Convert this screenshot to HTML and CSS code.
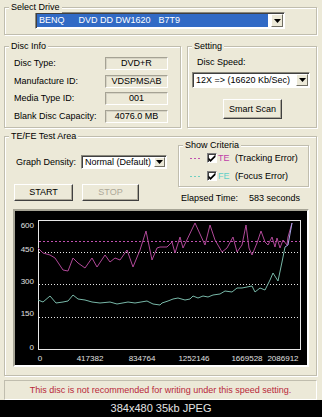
FILE: index.html
```html
<!DOCTYPE html>
<html>
<head>
<meta charset="utf-8">
<link rel="stylesheet" href="styles.css">
</head>
<body>
<div class="win">
  <div class="group g-drive">
    <span class="gtitle">Select Drive</span>
    <div class="drive-select">
      <span class="sel-hl"><span>BENQ</span><span class="sp1">DVD DD DW1620</span><span class="sp2">B7T9</span></span>
      <span class="arrow-btn"><svg width="7" height="4" viewBox="0 0 7 4"><path d="M0 0h7L3.5 4z" fill="#000"/></svg></span>
    </div>
  </div>

  <div class="row2">
    <div class="group g-info">
      <span class="gtitle">Disc Info</span>
      <div class="info-row"><span class="info-lbl">Disc Type:</span><span class="info-box">DVD+R</span></div>
      <div class="info-row"><span class="info-lbl">Manufacture ID:</span><span class="info-box">VDSPMSAB</span></div>
      <div class="info-row"><span class="info-lbl">Media Type ID:</span><span class="info-box">001</span></div>
      <div class="info-row"><span class="info-lbl">Blank Disc Capacity:</span><span class="info-box">4076.0 MB</span></div>
    </div>
    <div class="group g-setting">
      <span class="gtitle">Setting</span>
      <div class="lbl-speed">Disc Speed:</div>
      <div class="combo speed-select">
        <span class="combo-text">12X =&gt; (16620 Kb/Sec)</span>
        <span class="arrow-btn"><svg width="7" height="4" viewBox="0 0 7 4"><path d="M0 0h7L3.5 4z" fill="#000"/></svg></span>
      </div>
      <div class="btn btn-scan">Smart Scan</div>
    </div>
  </div>

  <div class="group g-test">
    <span class="gtitle">TE/FE Test Area</span>
    <div class="test-top">
      <div class="test-left">
        <div class="density-row">
          <span class="density-lbl">Graph Density:</span>
          <div class="combo density-select">
            <span class="combo-text">Normal (Default)</span>
            <span class="arrow-btn"><svg width="7" height="4" viewBox="0 0 7 4"><path d="M0 0h7L3.5 4z" fill="#000"/></svg></span>
          </div>
        </div>
        <div class="btn-row">
          <div class="btn btn-start">START</div>
          <div class="btn btn-stop">STOP</div>
        </div>
      </div>
      <div class="test-right">
        <div class="group g-criteria">
          <span class="gtitle">Show Criteria</span>
          <div class="crit-row">
            <svg class="dash" width="10" height="3" viewBox="0 0 10 3"><line x1="0" y1="1.5" x2="10" y2="1.5" stroke="#c050b0" stroke-width="1" stroke-dasharray="2 2"/></svg>
            <span class="chk"><svg width="8" height="8" viewBox="0 0 8 8"><path d="M0.5 3.5l2 2L7.5 0.5v2.5L2.5 8 0.5 6z" fill="#000"/></svg></span>
            <span class="code te">TE</span><span class="crit-txt">(Tracking Error)</span>
          </div>
          <div class="crit-row">
            <svg class="dash" width="10" height="3" viewBox="0 0 10 3"><line x1="0" y1="1.5" x2="10" y2="1.5" stroke="#70d0c0" stroke-width="1" stroke-dasharray="2 2"/></svg>
            <span class="chk"><svg width="8" height="8" viewBox="0 0 8 8"><path d="M0.5 3.5l2 2L7.5 0.5v2.5L2.5 8 0.5 6z" fill="#000"/></svg></span>
            <span class="code fe">FE</span><span class="crit-txt">(Focus Error)</span>
          </div>
        </div>
        <div class="elapsed"><span class="el-lbl">Elapsed Time:</span><span>583 seconds</span></div>
      </div>
    </div>
    <div class="graph">
      <svg width="292" height="154" viewBox="15 211 292 154">
        <rect x="15" y="211" width="292" height="154" fill="#000"/>
        <line x1="39" y1="241.5" x2="300" y2="241.5" stroke="#c050b0" stroke-width="1" stroke-dasharray="2 2"/>
        <line x1="39" y1="252.5" x2="300" y2="252.5" stroke="#e8e8e8" stroke-width="1" stroke-dasharray="1 2"/>
        <line x1="39" y1="284.5" x2="300" y2="284.5" stroke="#e8e8e8" stroke-width="1" stroke-dasharray="1 2"/>
        <line x1="39" y1="317.5" x2="300" y2="317.5" stroke="#e8e8e8" stroke-width="1" stroke-dasharray="1 2"/>
        <rect x="38.5" y="220.5" width="262" height="129" fill="none" stroke="#e8e8e8" stroke-width="1"/>
        <polyline fill="none" stroke="#b04898" stroke-width="1" points="38,248 43,253 50,255 55,258 63,270 68,271 73,258 78,263 85,268 92,258 97,267 105,255 110,262 115,258 120,260 127,250 133,267 140,250 146,231 152,260 157,248 160,247 167,247 172,242 175,253 180,237 183,248 195,223 205,245 210,225 215,240 222,252 227,248 233,237 237,252 242,245 246,225 249,248 252,255 257,243 261,231 265,242 268,245 272,237 275,247 277,238 280,248 283,240 287,245 288,237 292,223"/>
        <polyline fill="none" stroke="#78b8a8" stroke-width="1" points="38,300 43,302 50,296 56,303 63,302 68,301 73,295 78,299 85,300 92,302 100,303 110,302 117,304 128,302 135,303 147,301 153,304 160,305 162,303 168,301 173,299 178,298 185,300 190,299 193,296 198,298 203,296 208,297 213,295 220,294 225,291 232,292 237,288 242,288 247,287 252,286 255,292 260,288 265,290 270,280 273,273 278,281 282,262 285,247"/>
        <polyline fill="none" stroke="#a8a8e8" stroke-width="1" points="285,247 288,245 292,223"/>
        <g class="axis" fill="#e0e0e0" font-size="8">
          <text x="34" y="228" text-anchor="end">600</text>
          <text x="34" y="252" text-anchor="end">450</text>
          <text x="34" y="284" text-anchor="end">300</text>
          <text x="34" y="316" text-anchor="end">150</text>
          <text x="34" y="350" text-anchor="end">0</text>
          <text x="40" y="361" text-anchor="middle">0</text>
          <text x="90" y="361" text-anchor="middle">417382</text>
          <text x="142" y="361" text-anchor="middle">834764</text>
          <text x="194" y="361" text-anchor="middle">1252146</text>
          <text x="247" y="361" text-anchor="middle">1669528</text>
          <text x="283" y="361" text-anchor="middle">2086912</text>
        </g>
      </svg>
    </div>
  </div>

  <div class="status">This disc is not recommended for writing under this speed setting.</div>
</div>
<div class="caption">384x480 35kb JPEG</div>
</body>
</html>
```

FILE: styles.css
```css
html, body {
  margin: 0;
  padding: 0;
}
body {
  width: 322px;
  height: 417px;
  overflow: hidden;
  background: #ece9d8;
  font-family: "Liberation Sans", Arial, sans-serif;
  font-size: 9px;
  line-height: 11px;
  color: #000;
}
.win {
  height: 400px;
  box-sizing: border-box;
  padding-left: 4px;
  display: flex;
  flex-direction: column;
}
.group {
  position: relative;
  box-sizing: border-box;
  border: 1px solid #c0bdae;
  box-shadow: inset 1px 1px 0 #fff, 1px 1px 0 #fff;
}
.gtitle {
  position: absolute;
  top: -6px;
  left: 4px;
  padding: 0 2px;
  background: #ece9d8;
  line-height: 11px;
  white-space: nowrap;
}

/* Select drive */
.g-drive {
  margin-top: 7px;
  width: 313px;
  height: 28px;
  padding: 4px 0 0 30px;
}
.drive-select {
  width: 250px;
  height: 17px;
  box-sizing: border-box;
  border: 1px solid;
  border-color: #8a887c #fff #fff #8a887c;
  box-shadow: inset 1px 1px 0 #404040;
  background: #fff;
  padding: 1px 1px 1px 1px;
  display: flex;
}
.sel-hl {
  flex: 1;
  background: #316ac5;
  color: #fff;
  padding-left: 2px;
  line-height: 13px;
  white-space: nowrap;
}
.sp1 { margin-left: 14px; }
.sp2 { margin-left: 8px; }
.arrow-btn {
  width: 12px;
  box-sizing: border-box;
  margin-left: 3px;
  background: #ece9d8;
  border: 1px solid;
  border-color: #fff #716f64 #716f64 #fff;
  display: flex;
  align-items: center;
  justify-content: center;
}
.arrow-btn svg { display: block; }

/* row 2 */
.row2 {
  margin-top: 11px;
  display: flex;
  gap: 6px;
}
.g-info {
  width: 177px;
  height: 82px;
  padding: 10px 0 0 9px;
  display: flex;
  flex-direction: column;
  gap: 4.5px;
}
.info-row {
  display: flex;
  align-items: center;
  height: 13px;
}
.info-lbl {
  width: 91px;
  white-space: nowrap;
}
.info-box {
  width: 63px;
  height: 13px;
  box-sizing: border-box;
  border: 1px solid;
  border-color: #a5a294 #fff #fff #a5a294;
  box-shadow: 1px 1px 0 #d6d3c4 inset;
  text-align: center;
  line-height: 11px;
}
.g-setting {
  width: 130px;
  height: 82px;
  padding: 9.5px 0 0 4px;
}
.lbl-speed {
  margin-left: 5px;
}
.combo {
  box-sizing: border-box;
  border: 1px solid;
  border-color: #8a887c #fff #fff #8a887c;
  box-shadow: inset 1px 1px 0 #404040;
  background: #fff;
  padding: 1px;
  display: flex;
}
.combo-text {
  flex: 1;
  padding-left: 2px;
  white-space: nowrap;
  overflow: hidden;
}
.speed-select {
  margin-top: 4.5px;
  width: 118px;
  height: 16px;
  line-height: 12px;
}
.btn {
  box-sizing: border-box;
  background: #ece9d8;
  border: 1px solid;
  border-color: #fff #404040 #404040 #fff;
  box-shadow: inset -1px -1px 0 #aca899;
  text-align: center;
  white-space: nowrap;
}
.btn-scan {
  margin-top: 11px;
  margin-left: 31px;
  width: 59px;
  height: 20px;
  line-height: 18px;
}

/* Test area */
.g-test {
  margin-top: 8px;
  width: 313px;
  height: 240px;
  padding: 0 0 0 8px;
}
.test-top {
  display: flex;
  height: 72px;
}
.test-left {
  width: 165px;
  padding-left: 1px;
  box-sizing: border-box;
}
.density-row {
  margin-top: 18px;
  display: flex;
  align-items: center;
}
.density-lbl {
  margin-left: 2px;
  width: 65px;
  white-space: nowrap;
}
.density-select {
  width: 86px;
  height: 14px;
  line-height: 10px;
}
.density-select .arrow-btn { width: 11px; margin-left: 1px; }
.btn-row {
  margin-top: 15px;
  display: flex;
  gap: 9px;
}
.btn-start {
  width: 59px;
  height: 17px;
  line-height: 15px;
}
.btn-stop {
  width: 57px;
  height: 17px;
  line-height: 15px;
  color: #aca899;
}
.test-right {
  width: 131px;
  padding-top: 8px;
}
.g-criteria {
  width: 131px;
  height: 42px;
  padding: 6px 0 0 11px;
  display: flex;
  flex-direction: column;
  gap: 6px;
}
.crit-row {
  display: flex;
  align-items: center;
  height: 12px;
}
.dash { display: block; }
.chk {
  margin-left: 7px;
  width: 10px;
  height: 10px;
  box-sizing: border-box;
  background: #fff;
  border: 1px solid;
  border-color: #808080 #fff #fff #808080;
  box-shadow: inset 1px 1px 0 #404040;
  display: flex;
  align-items: center;
  justify-content: center;
}
.chk svg { display: block; }
.code {
  margin-left: 1px;
  width: 17px;
}
.te { color: #c040a8; }
.fe { color: #60d0c8; }
.crit-txt { white-space: nowrap; }
.elapsed {
  margin-top: 5.5px;
  padding-left: 3px;
  display: flex;
  white-space: nowrap;
}
.el-lbl { width: 68px; }

.graph {
  width: 296px;
  height: 158px;
  box-sizing: border-box;
  border: 2px solid;
  border-color: #a7a596 #fff #fff #a7a596;
}
.graph svg {
  display: block;
  font-family: "Liberation Sans", Arial, sans-serif;
}

.status {
  margin-top: 4px;
  width: 313px;
  height: 20px;
  box-sizing: border-box;
  border: 1px solid;
  border-color: #c0bdae #fff #fff #c0bdae;
  text-align: center;
  line-height: 18px;
  color: #b82838;
  white-space: nowrap;
}
.caption {
  height: 17px;
  background: #000;
  color: #e4e4e4;
  font-size: 11px;
  line-height: 17px;
  text-align: center;
}
```
